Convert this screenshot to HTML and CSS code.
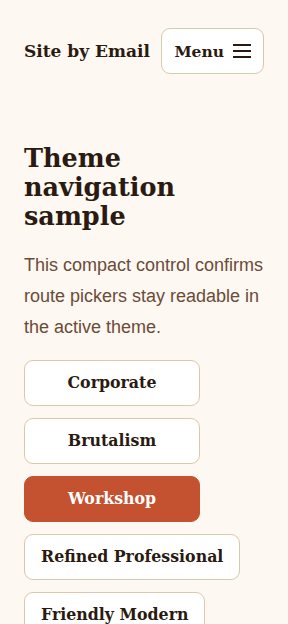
FILE: index.html
```html
<!DOCTYPE html>
<html lang="en">
<head>
    <meta charset="UTF-8">
    <meta name="viewport" content="width=device-width, initial-scale=1.0">
    <title>Theme navigation sample</title>
    <link rel="stylesheet" href="styles.css">
</head>
<body>
    <header class="site-header">
        <div class="brand">Site by Email</div>
        <button class="menu-button">
            Menu
            <svg width="18" height="16" viewBox="0 0 18 16" aria-hidden="true">
                <path d="M0 2h18M0 8h18M0 14h18" stroke="currentColor" stroke-width="2" fill="none"/>
            </svg>
        </button>
    </header>
    <main class="content">
        <h1>Theme navigation sample</h1>
        <p class="intro">This compact control confirms route pickers stay readable in the active theme.</p>
        <nav class="theme-list">
            <a class="theme-link" href="#">Corporate</a>
            <a class="theme-link" href="#">Brutalism</a>
            <a class="theme-link active" href="#">Workshop</a>
            <a class="theme-link" href="#">Refined Professional</a>
            <a class="theme-link" href="#">Friendly Modern</a>
        </nav>
    </main>
</body>
</html>
```

FILE: styles.css
```css
body {
    margin: 0;
    padding: 0 24px;
    background-color: #fdf8f1;
    color: #2a1a10;
    font-family: "DejaVu Serif", Georgia, serif;
}
.site-header {
    display: flex;
    align-items: center;
    justify-content: space-between;
    padding-top: 28px;
}
.brand {
    font-weight: bold;
    font-size: 17px;
}
.menu-button {
    display: flex;
    align-items: center;
    gap: 9px;
    height: 46px;
    padding: 0 12px;
    border: 1px solid #dcc8ac;
    border-radius: 9px;
    background-color: white;
    color: #2a1a10;
    font-family: inherit;
    font-weight: bold;
    font-size: 15.5px;
}
.content {
    padding-top: 70px;
}
h1 {
    margin: 0;
    font-size: 25.5px;
    line-height: 29px;
}
.intro {
    margin: 19px 0 17px;
    font-family: "Liberation Sans", Arial, sans-serif;
    font-size: 18px;
    line-height: 31px;
    color: #6b4b38;
}
.theme-list {
    display: flex;
    flex-direction: column;
    align-items: flex-start;
    gap: 12px;
}
.theme-link {
    display: block;
    min-width: 176px;
    box-sizing: border-box;
    padding: 12px 16px;
    border: 1px solid #dcc8ac;
    border-radius: 9px;
    background-color: white;
    color: #2a1a10;
    text-decoration: none;
    text-align: center;
    font-weight: bold;
    font-size: 15.8px;
    line-height: 20px;
}
.theme-link.active {
    background-color: #c4512f;
    border-color: #c4512f;
    color: white;
}
```
